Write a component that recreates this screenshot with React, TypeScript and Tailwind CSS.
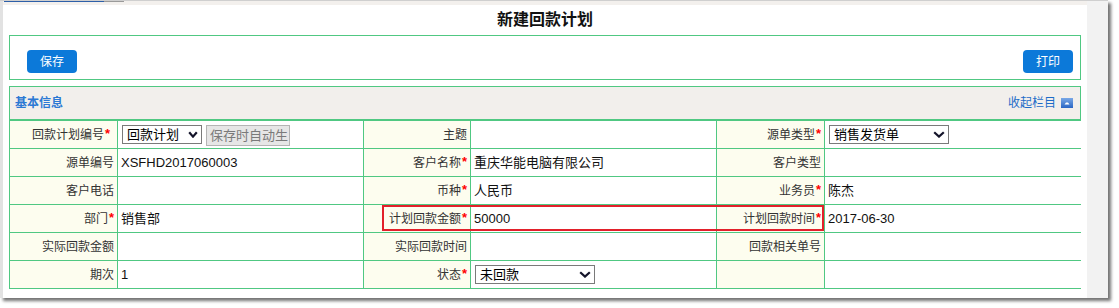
import React from "react";

const G = "border-[#50c882]";

function Chevron({ w = 10 }: { w?: number }) {
  return (
    <svg width={w} height={7} viewBox={`0 0 ${w} 7`} className="shrink-0">
      <path d={`M1.2 1.2 L${w / 2} ${5.6} L${w - 1.2} 1.2`} fill="none" stroke="#14142a" strokeWidth="2.2" />
    </svg>
  );
}

function Select({ text, w, cw = 10 }: { text: string; w: string; cw?: number }) {
  return (
    <div className={`${w} h-[19px] border border-[#7a7a7a] bg-white flex items-center justify-between pl-[4px] pr-[3px] text-[13px] leading-none text-black`}>
      <span>{text}</span>
      <Chevron w={cw} />
    </div>
  );
}

function Label({ text, req, extra = "" }: { text?: string; req?: boolean; extra?: string }) {
  return (
    <div className={`bg-[#fdfdef] h-[27px] flex items-center justify-end pr-[3px] text-[12px] leading-none text-[#333] ${extra}`}>
      {text && <span>{text}</span>}
      {req && <span className="text-[#ff0000] text-[13px] font-bold leading-none -mt-[3px] ml-px">*</span>}
    </div>
  );
}

function Value({ children }: { children?: React.ReactNode }) {
  return <div className="bg-white h-[27px] flex items-center pl-[3px] text-[13px] leading-none text-[#111]">{children}</div>;
}

export default function App() {
  return (
    <div className="w-[1119px] h-[308px] bg-white font-['Liberation_Sans','Noto_Sans_CJK_SC',sans-serif]">
      <div className="w-[1108px] h-[298px] flex flex-col shadow-[3px_3px_3px_rgba(0,0,0,0.55)] bg-white">
        <div className="h-px bg-[#cfcfcf] w-full" />
        <div className="flex flex-1">
          <div className="w-[3px] bg-[#e2e2e2]" />
          <div className="w-[1084px] flex flex-col">
            <div className="h-[4px] bg-[#f3f0ed] flex items-start">
              <div className="ml-px w-[100px] h-px bg-[#2d5fa8]" />
              <div className="w-[20px] h-px bg-[#9a9a9a]" />
            </div>
            <div className="h-[30px] flex items-center justify-center text-[16px] font-bold text-[#111] leading-none">
              新建回款计划
            </div>
            <div className={`mx-[6px] h-[45px] border ${G} flex items-start justify-between pt-[14px] pl-[17px] pr-[7px]`}>
              <button className="w-[50px] h-[23px] rounded-[4px] bg-[#0c79d9] text-white text-[12px] leading-none">保存</button>
              <button className="w-[50px] h-[23px] rounded-[4px] bg-[#0c79d9] text-white text-[12px] leading-none">打印</button>
            </div>
            <div className={`mx-[6px] mt-[6px] h-[34px] border ${G} bg-[#f2efec] flex items-center justify-between pl-[5px] pr-[7px]`}>
              <span className="text-[12px] font-bold text-[#2b78d4] leading-none">基本信息</span>
              <span className="flex items-center gap-[5px] text-[12px] text-[#1e6cc8] leading-none">
                收起栏目
                <svg width="12" height="10" viewBox="0 0 12 10">
                  <defs>
                    <linearGradient id="bg1" x1="0" y1="0" x2="0" y2="1">
                      <stop offset="0" stopColor="#7aa8e6" />
                      <stop offset="1" stopColor="#2a66c4" />
                    </linearGradient>
                  </defs>
                  <rect x="0" y="0" width="12" height="10" fill="url(#bg1)" />
                  <polygon points="3.5,6.5 5,4.5 7,4.5 8.5,6.5" fill="#ffffff" />
                </svg>
              </span>
            </div>
            <div className="mx-[6px] relative">
              <div className="grid grid-cols-[107px_245px_106px_245px_107px_256px] gap-px p-px bg-[#50c882]">
                <Label text="回款计划编号" req extra="pr-[7px]" />
                <Value>
                  <div className="flex items-start gap-[4px] pt-[4px] pl-px self-start">
                    <Select text="回款计划" w="w-[80px]" />
                    <div className="w-[84px] h-[21px] border border-[#b4b4b4] bg-[#e6e6e6] flex items-center pl-[3px] text-[13px] leading-none text-[#7a7a7a]">
                      保存时自动生
                    </div>
                  </div>
                </Value>
                <Label text="主题" />
                <Value />
                <Label text="源单类型" req />
                <Value>
                  <div className="pl-[1px]">
                    <Select text="销售发货单" w="w-[120px]" cw={12} />
                  </div>
                </Value>

                <Label text="源单编号" />
                <Value>XSFHD2017060003</Value>
                <Label text="客户名称" req />
                <Value>重庆华能电脑有限公司</Value>
                <Label text="客户类型" />
                <Value />

                <Label text="客户电话" />
                <Value />
                <Label text="币种" req />
                <Value>人民币</Value>
                <Label text="业务员" req />
                <Value>陈杰</Value>

                <Label text="部门" req />
                <Value>销售部</Value>
                <Label text="计划回款金额" req />
                <Value>50000</Value>
                <Label text="计划回款时间" req />
                <Value>2017-06-30</Value>

                <Label text="实际回款金额" />
                <Value />
                <Label text="实际回款时间" />
                <Value />
                <Label text="回款相关单号" />
                <Value />

                <Label text="期次" />
                <Value>1</Value>
                <Label text="状态" req />
                <Value>
                  <div className="pl-[1px]">
                    <Select text="未回款" w="w-[120px]" cw={12} />
                  </div>
                </Value>
                <Label />
                <Value />
              </div>
              <div className="absolute left-[373px] top-[85px] w-[442px] h-[26px] border-2 border-[#e2202a] pointer-events-none" />
            </div>
          </div>
          <div className="flex-1 bg-[#f2f2f2]" />
        </div>
      </div>
    </div>
  );
}
